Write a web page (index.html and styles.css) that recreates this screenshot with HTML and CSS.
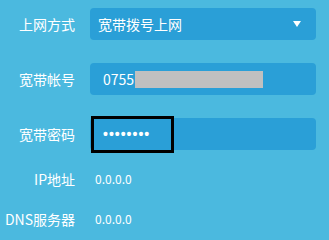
FILE: index.html
```html
<!DOCTYPE html>
<html lang="zh-CN">
<head>
<meta charset="utf-8">
<link rel="stylesheet" href="styles.css">
</head>
<body>
<div class="form">
  <div class="row">
    <div class="label">上网方式</div>
    <div class="box select">
      <span class="text sel-text">宽带拨号上网</span>
      <svg class="caret" width="8" height="6" viewBox="0 0 8 6"><path d="M0 0 H8 L4 6 Z" fill="#fff"/></svg>
    </div>
  </div>
  <div class="row">
    <div class="label">宽带帐号</div>
    <div class="box">
      <span class="text">0755</span><span class="mask"></span>
    </div>
  </div>
  <div class="row">
    <div class="label">宽带密码</div>
    <div class="box pwd">
      <span class="dots">••••••••</span>
      <span class="focus"></span>
    </div>
  </div>
  <div class="row info ip">
    <div class="label">IP地址</div>
    <div class="value">0.0.0.0</div>
  </div>
  <div class="row info dns">
    <div class="label">DNS服务器</div>
    <div class="value">0.0.0.0</div>
  </div>
</div>
</body>
</html>
```
FILE: styles.css
```css
html, body {
  margin: 0;
  padding: 0;
  background: #4bb9df;
  width: 329px;
  height: 236px;
  overflow: hidden;
}
body {
  font-family: "Noto Sans CJK SC", "Noto Sans", sans-serif;
  color: #fff;
}
.form {
  padding-top: 8px;
  display: flex;
  flex-direction: column;
}
.row {
  display: flex;
  align-items: center;
  height: 32px;
  margin-bottom: 23px;
}
.label {
  width: 75px;
  flex: none;
  text-align: right;
  font-size: 14px;
  line-height: 20px;
  margin-right: 15px;
  white-space: nowrap;
}
.box {
  position: relative;
  width: 226px;
  height: 32px;
  background: #2a9fd7;
  border-radius: 4px;
  display: flex;
  align-items: center;
  padding-left: 13px;
  box-sizing: border-box;
}
.text {
  font-size: 14px;
  line-height: 20px;
}
.select {
  padding-left: 8px;
  padding-right: 15px;
  justify-content: space-between;
}
.caret {
  display: block;
  margin-top: -1px;
}
.mask {
  display: inline-block;
  width: 128px;
  height: 17px;
  background: #c0c0c0;
  margin-left: 1px;
}
.dots {
  font-family: "Liberation Sans", sans-serif;
  font-size: 14px;
  font-weight: bold;
  letter-spacing: 1px;
  line-height: 16px;
}
.focus {
  position: absolute;
  left: 1px;
  top: -2px;
  width: 83px;
  height: 37px;
  border: 3px solid #000;
  box-sizing: border-box;
}
.info {
  height: 20px;
  margin-bottom: 0;
}
.ip {
  margin-top: -4px;
}
.dns {
  margin-top: 20px;
}
.info .label {
  margin-right: 20px;
}
.value {
  font-size: 12px;
  line-height: 20px;
}
```
